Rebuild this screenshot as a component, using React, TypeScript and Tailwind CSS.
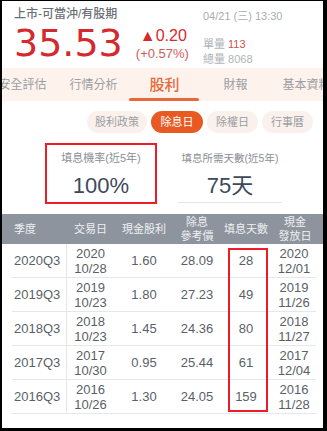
import React from "react";

const rows = [
  { q: "2020Q3", d1: "2020", d2: "10/28", c: "1.60", p: "28.09", n: "28", f1: "2020", f2: "12/01" },
  { q: "2019Q3", d1: "2019", d2: "10/23", c: "1.80", p: "27.23", n: "49", f1: "2019", f2: "11/26" },
  { q: "2018Q3", d1: "2018", d2: "10/23", c: "1.45", p: "24.36", n: "80", f1: "2018", f2: "11/27" },
  { q: "2017Q3", d1: "2017", d2: "10/30", c: "0.95", p: "25.44", n: "61", f1: "2017", f2: "12/04" },
  { q: "2016Q3", d1: "2016", d2: "10/26", c: "1.30", p: "24.05", n: "159", f1: "2016", f2: "11/28" },
];

export default function App() {
  return (
    <div className="relative w-[327px] h-[431px] overflow-hidden bg-white border-l-2 border-t border-r-[4px] border-b-[3px] border-black font-['Liberation_Sans','Noto_Sans_CJK_TC',sans-serif]">
      {/* header */}
      <div className="flex h-[67px] pt-[6px]">
        <div className="w-[201px] pl-3">
          <div className="text-[12px] leading-[14px] font-medium text-[#6b6f75]">上市-可當沖/有股期</div>
          <div className="flex items-start mt-[3px]">
            <div className="font-['DejaVu_Sans',sans-serif] text-[38px] leading-[38px] text-[#d42a2e]">35.53</div>
            <div className="ml-[17px] mt-[3px] flex flex-col">
              <div className="text-[16px] leading-[18px] text-[#d42a2e]">▲0.20</div>
              <div className="text-[13px] leading-[16px] mt-[1px] -ml-[4px] text-[#d45a5a]">(+0.57%)</div>
            </div>
          </div>
        </div>
        <div className="flex flex-col text-[11px] leading-[14px]">
          <div className="mt-[2px] text-[#a9adb2] whitespace-nowrap">04/21 (三) 13:30</div>
          <div className="mt-[14px] text-[#b0b4b8]">
            單量 <span className="text-[#d45050]">113</span>
          </div>
          <div className="mt-[1px] text-[#b0b4b8]">總量 8068</div>
        </div>
      </div>

      {/* tabs */}
      <div className="h-[33px] bg-[#fdf2ec] flex -ml-[15px]">
        {["安全評估", "行情分析", "股利", "財報", "基本資料"].map((t) => (
          <div key={t} className="relative w-[71px] shrink-0 flex items-center justify-center">
            {t === "股利" ? (
              <>
                <span className="text-[15px] leading-[18px] text-[#e8683a] font-medium">{t}</span>
                <div className="absolute bottom-0 left-0 w-[70px] h-[3px] rounded-full bg-[#e8683a]" />
              </>
            ) : (
              <span className="text-[12px] leading-[14px] text-[#9b9ea3] whitespace-nowrap">{t}</span>
            )}
          </div>
        ))}
      </div>

      {/* pills */}
      <div className="mt-[10px] flex gap-[4px] pl-[85px]">
        <div className="w-[60px] h-[22px] rounded-full bg-[#fbf1ec] flex items-center justify-center text-[11px] text-[#9a9da2]">股利政策</div>
        <div className="w-[52px] h-[22px] rounded-full bg-[#e85a22] flex items-center justify-center text-[11px] text-white">除息日</div>
        <div className="w-[51px] h-[22px] rounded-full bg-[#fbf1ec] flex items-center justify-center text-[11px] text-[#9a9da2]">除權日</div>
        <div className="w-[51px] h-[22px] rounded-full bg-[#fbf1ec] flex items-center justify-center text-[11px] text-[#9a9da2]">行事曆</div>
      </div>

      {/* stats */}
      <div className="mt-[10px] flex pl-[43px]">
        <div className="w-[112px] h-[61px] border-2 border-[#ee1c25] flex flex-col items-center pt-[6px]">
          <div className="text-[11px] leading-[14px] text-[#8a8f96] whitespace-nowrap">填息機率(近5年)</div>
          <div className="mt-[8px] text-[22px] leading-[26px] text-[#3d4a5a]">100%</div>
        </div>
        <div className="ml-[21px] w-[104px] h-[60px] border-b border-[#e3e5e8] flex flex-col items-center pt-[8px]">
          <div className="text-[10.5px] leading-[14px] text-[#8a8f96] whitespace-nowrap">填息所需天數(近5年)</div>
          <div className="mt-[8px] text-[22px] leading-[26px] text-[#3d4a5a]">75天</div>
        </div>
      </div>

      {/* table */}
      <div className="mt-[10px]">
        <div className="h-[30px] bg-[#8d949d] flex items-center pl-[10px] text-[11px] leading-[14px] text-[#eef0f3]">
          <div className="w-[55px] pl-[2px]">季度</div>
          <div className="w-[47px] text-center">交易日</div>
          <div className="w-[60px] text-center">現金股利</div>
          <div className="w-[46px] text-center">除息<br />參考價</div>
          <div className="w-[52px] text-center">填息天數</div>
          <div className="w-[46px] text-center">現金<br />發放日</div>
        </div>
        <div className="pl-[10px]">
          {rows.map((r) => (
            <div key={r.q} className="flex h-[34px] w-[304px] border-b border-[#e6e7e9] text-[13px] leading-[15px] text-[#5a5f66]">
              <div className="w-[55px] pl-[2px] flex items-center border-r border-[#e6e7e9]">{r.q}</div>
              <div className="w-[47px] flex flex-col items-center justify-center"><div>{r.d1}</div><div>{r.d2}</div></div>
              <div className="w-[60px] flex items-center justify-center">{r.c}</div>
              <div className="w-[46px] flex items-center justify-center">{r.p}</div>
              <div className="w-[52px] flex items-center justify-center">{r.n}</div>
              <div className="w-[44px] flex flex-col items-center justify-center"><div>{r.f1}</div><div>{r.f2}</div></div>
            </div>
          ))}
        </div>
      </div>

      {/* annotation box */}
      <div className="absolute left-[226px] top-[247px] w-[40px] h-[164px] border-2 border-[#ee1c25]" />
    </div>
  );
}
